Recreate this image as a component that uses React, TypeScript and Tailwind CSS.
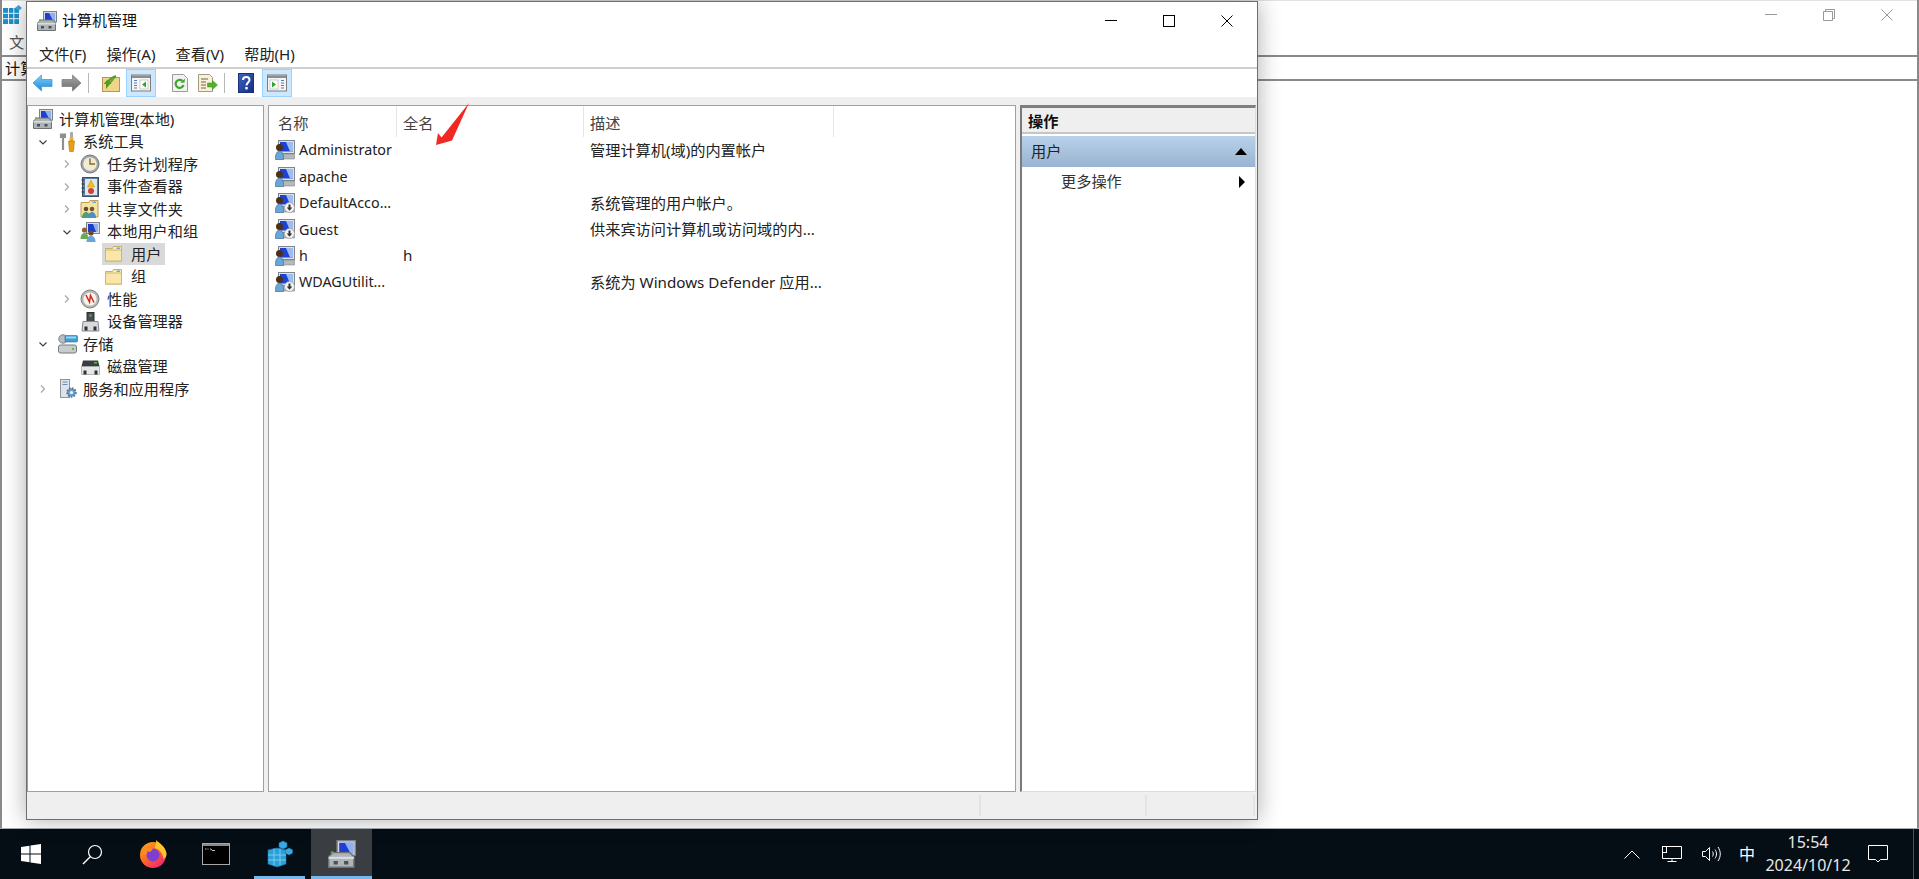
import * as React from "react";

// ---- small drawings ----

function ComputerIcon({ className = "w-5 h-5" }: { className?: string }) {
    return (
        <svg viewBox="0 0 20 20" className={className}>
            <rect x="6.5" y="0.5" width="13" height="10.5" fill="#d5d9df" stroke="#7d8288" />
            <rect x="8" y="2" width="10" height="7.5" fill="#1f3fd0" />
            <path d="M12 2h6v7.5h-2z" fill="#8fb0ef" />
            <path d="M0.5 12l3-3h12l3 3v7.5H0.5z" fill="#aeb4b8" stroke="#6c7276" />
            <rect x="0.5" y="12" width="18" height="1.5" fill="#d9dde0" />
            <rect x="4" y="15" width="3" height="2.5" fill="#4b5054" />
            <rect x="11.5" y="15" width="3" height="2.5" fill="#4b5054" />
            <circle cx="3" cy="9" r="1" fill="#62b04a" />
        </svg>
    );
}

function UserIcon({ disabled = false }: { disabled?: boolean }) {
    return (
        <svg viewBox="0 0 20 20" className="w-5 h-5 shrink-0">
            <rect x="3.5" y="0.5" width="16" height="13" fill="#dfe3e6" stroke="#7f8589" />
            <rect x="5" y="2" width="13" height="9.5" fill="#1b44d6" />
            <path d="M11 2h7v9.5h-3z" fill="#9cbcf2" />
            <rect x="7" y="14.5" width="12.500" height="4.500" fill="#b4b9bd" stroke="#7f8589" strokeWidth="0.6" />
            <circle cx="4.5" cy="7.500" r="3.500" fill="#4e3019" />
            <path d="M0.500 17.500c0-4 2-6.500 4-6.500s4 2.500 4 6.500v2h-8z" fill="#6aa6d8" stroke="#3f6f99" strokeWidth="0.7" />
            {disabled && (
                <>
                    <circle cx="14.5" cy="14.5" r="5" fill="#f4f4f4" stroke="#9a9a9a" strokeWidth="0.7" />
                    <path d="M13.5 11.5h2v3h1.8l-2.8 3.3-2.8-3.3h1.8z" fill="#333" />
                </>
            )}
        </svg>
    );
}

function FolderIcon() {
    return (
        <svg viewBox="0 0 20 18" className="w-5 h-[18px] shrink-0">
            <path d="M1.5 3.5h7l1-2h8v14.5h-16z" fill="#fbeeb8" stroke="#c9ad68" />
            <rect x="1.5" y="5" width="16" height="11" fill="#f8e7a8" stroke="#d0b672" />
            <rect x="12.5" y="2.5" width="3.5" height="1.5" fill="#6aa7dc" />
        </svg>
    );
}

function ToolsIcon() {
    return (
        <svg viewBox="0 0 20 20" className="w-5 h-5 shrink-0">
            <path d="M5 1.5v4M3 1.5v3.5h4V1.5M5 5v13" stroke="#8b9094" strokeWidth="2.2" fill="none" />
            <path d="M12.5 0.5h2v5h-2z" fill="#a8adb1" stroke="#74797d" strokeWidth="0.5" />
            <rect x="11.5" y="5.5" width="4" height="3.5" fill="#f0b020" />
            <path d="M10.5 9h6l-.8 9a2 2 0 0 1-4.4 0z" fill="#e8a010" stroke="#a06f10" strokeWidth="0.5" />
        </svg>
    );
}

function ClockIcon() {
    return (
        <svg viewBox="0 0 20 20" className="w-5 h-5 shrink-0">
            <circle cx="10" cy="10" r="9" fill="#a2a5a8" stroke="#74777a" />
            <circle cx="10" cy="10" r="6.8" fill="#f0ead6" />
            <path d="M10 4.5v5.5h5" stroke="#8a6a20" strokeWidth="1.4" fill="none" />
        </svg>
    );
}

function EventIcon() {
    return (
        <svg viewBox="0 0 20 20" className="w-5 h-5 shrink-0">
            <rect x="2.5" y="0.5" width="16" height="19" fill="#5c7fa8" stroke="#38506e" />
            <rect x="5" y="2" width="12" height="16" fill="#dfe7ef" />
            <path d="M11 3l3.5 7h-7z" fill="#f3c218" stroke="#b98a10" strokeWidth="0.5" />
            <circle cx="11" cy="14" r="3" fill="#cf4038" />
            <path d="M1.5 3h3M1.5 7h3M1.5 11h3M1.5 15h3" stroke="#30363c" strokeWidth="1.2" />
        </svg>
    );
}

function ShareIcon() {
    return (
        <svg viewBox="0 0 20 20" className="w-5 h-5 shrink-0">
            <path d="M1 3.5h8l1-2h8v16.5H1z" fill="#f5e3a0" stroke="#b99d5c" />
            <rect x="12.5" y="2.5" width="3.5" height="1.5" fill="#6aa7dc" />
            <circle cx="6" cy="10" r="2.3" fill="#6a4a2a" />
            <path d="M2 19c0-4 2-6 4-6s4 2 4 6z" fill="#4fa06a" />
            <circle cx="12" cy="10" r="2.3" fill="#7a5232" />
            <path d="M8 19c0-4 2-6 4-6s4 2 4 6z" fill="#4d8fc4" />
        </svg>
    );
}

function UsersGroupIcon() {
    return (
        <svg viewBox="0 0 20 20" className="w-5 h-5 shrink-0">
            <rect x="6.5" y="0.5" width="13" height="11" fill="#d9dde0" stroke="#7f8589" />
            <rect x="8" y="2" width="10" height="8" fill="#1b3fc8" />
            <path d="M13 2h5v8h-2z" fill="#8fb0ef" />
            <circle cx="4.5" cy="8" r="2.6" fill="#8a6236" />
            <path d="M0.5 17c0-4 2-6 4-6s4 2 4 6z" fill="#6aa85a" />
            <circle cx="11" cy="11" r="2.6" fill="#6a4a2a" />
            <path d="M6.5 20c0-4 2-6.2 4.5-6.2s4.5 2.2 4.500 6.200z" fill="#6da3d4" />
        </svg>
    );
}

function PerfIcon() {
    return (
        <svg viewBox="0 0 20 20" className="w-5 h-5 shrink-0">
            <circle cx="10" cy="10" r="9" fill="#b6b8b4" stroke="#7d7f7c" />
            <circle cx="10" cy="10" r="6.6" fill="#f4f4ea" />
            <path d="M6 6l3.500 7 1-6.500 3.500 7" stroke="#cf2a20" strokeWidth="1.5" fill="none" />
        </svg>
    );
}

function DeviceIcon() {
    return (
        <svg viewBox="0 0 20 20" className="w-5 h-5 shrink-0">
            <rect x="7" y="0.5" width="7" height="9" fill="#474c50" stroke="#2c3033" />
            <rect x="9.5" y="2.5" width="2" height="2" fill="#62c050" />
            <path d="M3 9.5h15l1 9.5H2z" fill="#d8dadc" stroke="#85898d" />
            <rect x="4.5" y="14.5" width="3" height="4" fill="#2e3235" />
            <rect x="13.5" y="14.5" width="3" height="4" fill="#2e3235" />
        </svg>
    );
}

function StorageIcon() {
    return (
        <svg viewBox="0 0 20 20" className="w-5 h-5 shrink-0">
            <rect x="0.5" y="11" width="18" height="8" rx="2" fill="#c8cccd" stroke="#777b7d" />
            <circle cx="15" cy="15" r="1.2" fill="#5ec04a" />
            <circle cx="5" cy="5" r="4.2" fill="#b9bdbf" stroke="#7d8183" />
            <rect x="7" y="1.5" width="12.5" height="6.5" rx="1" fill="#3f9ed8" stroke="#2b6f9e" strokeWidth="0.6" />
            <rect x="8" y="2.5" width="10" height="2" fill="#9fd4f2" />
        </svg>
    );
}

function DiskIcon() {
    return (
        <svg viewBox="0 0 20 20" className="w-5 h-5 shrink-0">
            <path d="M3 3.5h15l1.5 6h-18z" fill="#3a3e42" />
            <rect x="14" y="5" width="3" height="1.5" fill="#5ec04a" />
            <path d="M1.5 9.5h18v8h-18z" fill="#e6e7e8" stroke="#9a9d9f" strokeWidth="0.7" />
            <rect x="3.5" y="13.5" width="3" height="4" fill="#2e3235" />
            <rect x="14.5" y="13.5" width="3" height="4" fill="#2e3235" />
        </svg>
    );
}

function ServiceIcon() {
    return (
        <svg viewBox="0 0 20 20" className="w-5 h-5 shrink-0">
            <rect x="2.5" y="0.5" width="9" height="18" fill="#dfe3e8" stroke="#8d959c" />
            <path d="M4.5 3h5M4.5 5.5h5" stroke="#5f8fbc" strokeWidth="1.2" />
            <circle cx="13.5" cy="13.5" r="4.2" fill="#6f9fc8" stroke="#4a769c" strokeWidth="2" strokeDasharray="1.6 1.2" />
            <circle cx="13.5" cy="13.5" r="1.6" fill="#eef4fa" />
        </svg>
    );
}

function ChevronRight() {
    return (
        <svg viewBox="0 0 14 14" className="w-[14px] h-[14px]">
            <path d="M5 3.5l3.5 3.5-3.5 3.5" stroke="#a6a6a6" strokeWidth="1.2" fill="none" />
        </svg>
    );
}

function ChevronDown() {
    return (
        <svg viewBox="0 0 14 14" className="w-[14px] h-[14px]">
            <path d="M3.5 5.5l3.5 3.5 3.5-3.5" stroke="#404040" strokeWidth="1.2" fill="none" />
        </svg>
    );
}

function ArrowIcon({ back }: { back: boolean }) {
    return (
        <svg viewBox="0 0 21 18" className="w-[21px] h-[18px]">
            <defs>
                <linearGradient id="arrBlue" x1="0" y1="0" x2="0" y2="1">
                    <stop offset="0" stopColor="#7fd0fa" />
                    <stop offset="1" stopColor="#1f86d8" />
                </linearGradient>
                <linearGradient id="arrGray" x1="0" y1="0" x2="0" y2="1">
                    <stop offset="0" stopColor="#a8a8a8" />
                    <stop offset="1" stopColor="#6a6a6a" />
                </linearGradient>
            </defs>
            {back ? (
                <path d="M1 9l8.5-8v4.5h10.5v7H9.5V17z" fill="url(#arrBlue)" stroke="#3b93d6" strokeWidth="0.7" />
            ) : (
                <path d="M20 9l-8.5-8v4.5H1v7h10.5V17z" fill="url(#arrGray)" stroke="#777" strokeWidth="0.7" />
            )}
        </svg>
    );
}

function UpFolderIcon() {
    return (
        <svg viewBox="0 0 18 18" className="w-[18px] h-[18px]">
            <rect x="0.5" y="3.5" width="17" height="14" fill="#f0d48a" stroke="#b9975a" />
            <path d="M4 15v-5H1.500l4-4.500 4 4.500H7v1c0-3 3-6 7-8" fill="#4f9e24" />
            <path d="M5.500 11c0-4 3-7 8.500-9" stroke="#4f9e24" strokeWidth="2.2" fill="none" />
        </svg>
    );
}

function PaneIcon({ flip = false }: { flip?: boolean }) {
    return (
        <svg viewBox="0 0 20 18" className="w-5 h-[18px]">
            <rect x="0.5" y="1" width="19" height="16" fill="#f6f6f6" stroke="#7c7c7c" />
            <rect x="1" y="1.500" width="18" height="2.500" fill="#8d8d8d" />
            {flip ? (
                <>
                    <rect x="3" y="6" width="8" height="9" fill="#fff" stroke="#b0b0b0" strokeWidth="0.6" />
                    <path d="M5 7.500l4 3-4 3z" fill="#29a829" />
                    <path d="M14 6.500h3M14 9h3M14 11.500h3M14 14h3" stroke="#4d7fbb" strokeWidth="1.1" />
                </>
            ) : (
                <>
                    <rect x="9" y="6" width="8" height="9" fill="#fff" stroke="#b0b0b0" strokeWidth="0.6" />
                    <path d="M15 7.500l-4 3 4 3z" fill="#29a829" />
                    <path d="M3 6.500h3M3 9h3M3 11.500h3M3 14h3" stroke="#4d7fbb" strokeWidth="1.1" />
                </>
            )}
        </svg>
    );
}

function RefreshIcon() {
    return (
        <svg viewBox="0 0 16 18" className="w-4 h-[18px]">
            <path d="M0.500 0.500h11l4 4v13h-15z" fill="#f2f2f2" stroke="#9a9a9a" />
            <path d="M11.500 11a4 4 0 1 1-1-4" stroke="#3ea62a" strokeWidth="2.200" fill="none" />
            <path d="M8.500 9l4-.500.500-4z" fill="#3ea62a" />
        </svg>
    );
}

function ExportIcon() {
    return (
        <svg viewBox="0 0 20 18" className="w-5 h-[18px]">
            <path d="M0.500 0.500h11l3 3v14h-14z" fill="#f8f1d8" stroke="#a39a80" />
            <path d="M3 5h7M3 8h5M3 11h5M3 14h5" stroke="#6c6650" strokeWidth="1.100" />
            <path d="M19.500 11l-5-4.500v2.500h-5v4h5v2.500z" fill="#4cb52c" stroke="#3b8c22" strokeWidth="0.500" />
        </svg>
    );
}

function HelpIcon() {
    return (
        <svg viewBox="0 0 16 20" className="w-4 h-5">
            <defs>
                <linearGradient id="helpBlue" x1="0" y1="0" x2="1" y2="1">
                    <stop offset="0" stopColor="#3a64c8" />
                    <stop offset="1" stopColor="#142c7e" />
                </linearGradient>
            </defs>
            <rect x="0.500" y="0.500" width="15" height="19" fill="url(#helpBlue)" stroke="#1a2f78" />
            <path d="M5 7c0-4 6.500-4 6.500 0 0 2.500-3 2.500-3 5.500" stroke="#fff" strokeWidth="2" fill="none" />
            <rect x="7.300" y="14" width="2.400" height="2.400" fill="#fff" />
        </svg>
    );
}

function RegIcon({ className = "w-[26px] h-[28px]" }: { className?: string }) {
    const cell = "#2d9fd8";
    return (
        <svg viewBox="0 0 26 28" className={className}>
            <path d="M1 10l9-2 9 2v14l-9 3-9-3z" fill={cell} stroke="#1a7ab0" strokeWidth="0.6" />
            <path d="M7 8.500v17M13 8.500v17M1 15h18M1 20h18" stroke="#7fd0f4" strokeWidth="0.9" />
            <path d="M16 1l4 2v4l-4 2-4-2V3z" fill="#38a8e0" stroke="#1a7ab0" strokeWidth="0.5" />
            <path d="M22 8l3.500 1.800v3.400L22 15l-3.500-1.800V9.800z" fill="#38a8e0" stroke="#1a7ab0" strokeWidth="0.5" />
        </svg>
    );
}

function WinGridIcon() {
    return (
        <svg viewBox="0 0 20 20" className="w-5 h-5">
            <rect x="0" y="3" width="16" height="16" fill="#1f8fc8" />
            <path d="M5.500 3v16M10.800 3v16M0 8.300h16M0 13.700h16" stroke="#e8f6fd" strokeWidth="1" />
            <path d="M15.500 0l3.500 3-3.500 3-3.500-3z" fill="#38a8e0" />
        </svg>
    );
}

function FirefoxIcon() {
    return (
        <svg viewBox="0 0 28 28" className="w-7 h-7">
            <defs>
                <linearGradient id="foxBody" x1="0" y1="0" x2="0.800" y2="1">
                    <stop offset="0" stopColor="#ffb21f" />
                    <stop offset="0.500" stopColor="#ff6a1f" />
                    <stop offset="1" stopColor="#f0207a" />
                </linearGradient>
            </defs>
            <circle cx="14" cy="15" r="13" fill="url(#foxBody)" />
            <path d="M17 0c3 3 9 6 10.500 13 .5 3-1 5-3 6-1-6-4-10-9-11 1-3 2-5 1.500-8z" fill="#ffc52a" />
            <circle cx="14" cy="15" r="6.500" fill="#7c3fd0" />
            <path d="M3 8c3-2 8-1 11 1l-3 3-3-1c1 2-1 4-3 4-2-2-3-5-2-7z" fill="#ff8a1f" />
        </svg>
    );
}

function CmdIcon() {
    return (
        <svg viewBox="0 0 28 22" className="w-7 h-[22px]">
            <rect x="0.500" y="0.500" width="27" height="21" fill="#000" stroke="#a8a8a8" />
            <rect x="1" y="1" width="26" height="2" fill="#8a8a8a" />
            <path d="M3 6h1.500M5.500 6h1M8 6h1l1 1.500h3" stroke="#d0d0d0" strokeWidth="0.900" fill="none" />
        </svg>
    );
}

function WindowsLogo() {
    return (
        <svg viewBox="0 0 20 20" className="w-5 h-5">
            <path d="M0 3l8.500-1.200v7.700H0zM9.500 1.600L20 0v9.500H9.500zM0 10.500h8.500v7.700L0 17zM9.500 10.500H20V20L9.500 18.400z" fill="#fff" />
        </svg>
    );
}

function SearchGlyph() {
    return (
        <svg viewBox="0 0 21 21" className="w-[21px] h-[21px]">
            <circle cx="13" cy="8" r="6.500" stroke="#fff" strokeWidth="1.200" fill="none" />
            <path d="M8.500 12.500L1 20" stroke="#fff" strokeWidth="1.400" />
        </svg>
    );
}

// ---- data ----

type TreeRow = {
    label: string;
    icon: React.ReactNode;
    level: 0 | 1 | 2 | 3;
    chevron?: "right" | "down";
    selected?: boolean;
};

const treeRows: TreeRow[] = [
    { label: "计算机管理(本地)", icon: <ComputerIcon className="w-5 h-5 shrink-0" />, level: 0 },
    { label: "系统工具", icon: <ToolsIcon />, level: 1, chevron: "down" },
    { label: "任务计划程序", icon: <ClockIcon />, level: 2, chevron: "right" },
    { label: "事件查看器", icon: <EventIcon />, level: 2, chevron: "right" },
    { label: "共享文件夹", icon: <ShareIcon />, level: 2, chevron: "right" },
    { label: "本地用户和组", icon: <UsersGroupIcon />, level: 2, chevron: "down" },
    { label: "用户", icon: <FolderIcon />, level: 3, selected: true },
    { label: "组", icon: <FolderIcon />, level: 3 },
    { label: "性能", icon: <PerfIcon />, level: 2, chevron: "right" },
    { label: "设备管理器", icon: <DeviceIcon />, level: 2 },
    { label: "存储", icon: <StorageIcon />, level: 1, chevron: "down" },
    { label: "磁盘管理", icon: <DiskIcon />, level: 2 },
    { label: "服务和应用程序", icon: <ServiceIcon />, level: 1, chevron: "right" },
];

const users = [
    { name: "Administrator", full: "", desc: "管理计算机(域)的内置帐户", disabled: false },
    { name: "apache", full: "", desc: "", disabled: false },
    { name: "DefaultAcco...", full: "", desc: "系统管理的用户帐户。", disabled: true },
    { name: "Guest", full: "", desc: "供来宾访问计算机或访问域的内...", disabled: true },
    { name: "h", full: "h", desc: "", disabled: false },
    { name: "WDAGUtilit...", full: "", desc: "系统为 Windows Defender 应用...", disabled: true },
];

// ---- window parts ----

function Tree() {
    return (
        <div className="w-[237px] border border-[#a0a0a0] bg-white pt-[2px] text-[15.2px] text-[#222]">
            {treeRows.map((row) => {
                const chevronBox = (
                    <span className="w-[14px] h-[14px] shrink-0">
                        {row.chevron === "right" && <ChevronRight />}
                        {row.chevron === "down" && <ChevronDown />}
                    </span>
                );
                if (row.level === 0) {
                    return (
                        <div key={row.label} className="flex items-center h-[22.5px] pl-[5px] gap-[6px]">
                            {row.icon}
                            <span>{row.label}</span>
                        </div>
                    );
                }
                if (row.level === 1) {
                    return (
                        <div key={row.label} className="flex items-center h-[22.5px] pl-[8px]">
                            {chevronBox}
                            <span className="ml-[8px] mr-[5px]">{row.icon}</span>
                            <span>{row.label}</span>
                        </div>
                    );
                }
                if (row.level === 2) {
                    return (
                        <div key={row.label} className="flex items-center h-[22.5px] pl-[32px]">
                            {chevronBox}
                            <span className="ml-[6px] mr-[7px]">{row.icon}</span>
                            <span>{row.label}</span>
                        </div>
                    );
                }
                return (
                    <div key={row.label} className="flex items-center h-[22.5px] pl-[74px]">
                        <div className={row.selected ? "flex items-center gap-[7px] pl-[2px] pr-[4px] h-[22px] bg-[#d9d9d9]" : "flex items-center gap-[7px] pl-[2px] pr-[4px] h-[22px]"}>
                            {row.icon}
                            <span>{row.label}</span>
                        </div>
                    </div>
                );
            })}
        </div>
    );
}

function UserList() {
    return (
        <div className="w-[748px] border border-[#a0a0a0] bg-white text-[15.2px] text-[#222]">
            <div className="flex h-[31px] text-[#444]">
                <div className="w-[128px] pl-[9px] pt-[6px] border-r border-[#e6e6e6]">名称</div>
                <div className="w-[187px] pl-[6px] pt-[6px] border-r border-[#e6e6e6]">全名</div>
                <div className="w-[250px] pl-[6px] pt-[6px] border-r border-[#e6e6e6]">描述</div>
            </div>
            {users.map((u) => (
                <div key={u.name} className="flex items-center h-[26.4px]">
                    <div className="w-[128px] pl-[6px] flex items-center gap-[4px]">
                        <UserIcon disabled={u.disabled} />
                        <span className="whitespace-nowrap text-[14.3px]">{u.name}</span>
                    </div>
                    <div className="w-[187px] pl-[6px]">{u.full}</div>
                    <div className="w-[250px] pl-[6px] whitespace-nowrap">{u.desc}</div>
                </div>
            ))}
        </div>
    );
}

function ActionPane() {
    return (
        <div className="w-[236px] border-l-[2px] border-r border-b border-[#7a7a7a] border-r-[#dcdcdc] border-b-[#dcdcdc] border-t-[3px] border-t-[#7f7f7f] bg-white text-[15.2px] text-[#222]">
            <div className="h-[26px] pt-[3px] bg-[#efefef] pl-[6px] flex items-center font-bold text-[#111] border-b-[2px] border-[#c6c6c6]">操作</div>
            <div className="h-[31px] mt-[2px] bg-gradient-to-b from-[#b9d1ea] to-[#99b4d1] flex items-center justify-between pl-[9px] pr-[8px]">
                <span>用户</span>
                <span className="w-0 h-0 border-x-[6px] border-x-transparent border-b-[7px] border-b-black" />
            </div>
            <div className="h-[29px] flex items-center justify-between pl-[39px] pr-[10px] text-[#333]">
                <span>更多操作</span>
                <span className="w-0 h-0 border-y-[6px] border-y-transparent border-l-[6px] border-l-black" />
            </div>
        </div>
    );
}

function MainWindow() {
    return (
        <div className="absolute left-[26px] top-[1px] w-[1232px] h-[819px] flex flex-col border border-[#6e6e6e] bg-[#efefef] shadow-[0_0_22px_rgba(0,0,0,0.32)]">
            <div className="h-[40px] bg-white flex items-center pl-[10px] pb-[3px] shrink-0">
                <ComputerIcon />
                <span className="ml-[5px] text-[15px] text-[#111]">计算机管理</span>
                <div className="ml-auto flex items-center">
                    <div className="w-[58px] flex justify-center">
                        <span className="w-3 h-px bg-black" />
                    </div>
                    <div className="w-[58px] flex justify-center">
                        <span className="w-3 h-3 border border-black" />
                    </div>
                    <div className="w-[58px] flex justify-center pr-[1px]">
                        <svg viewBox="0 0 12 12" className="w-3 h-3">
                            <path d="M0.500 0.500l11 11M11.500 0.500l-11 11" stroke="#000" strokeWidth="1" />
                        </svg>
                    </div>
                    <div className="w-[1px]" />
                </div>
            </div>
            <div className="h-[27px] bg-white flex items-center gap-[20px] pl-[12px] text-[15.2px] text-[#222] border-b-[2px] border-[#cfcfcf] shrink-0">
                <span>文件(F)</span>
                <span>操作(A)</span>
                <span>查看(V)</span>
                <span>帮助(H)</span>
            </div>
            <div className="h-[28px] bg-white flex items-center pl-[5px] shrink-0">
                <ArrowIcon back />
                <span className="w-2" />
                <ArrowIcon back={false} />
                <span className="w-px h-5 bg-[#b8b8b8] ml-[6px] mr-[13px]" />
                <UpFolderIcon />
                <div className="ml-[6px] w-[30px] h-[28px] bg-[#cce8ff] border border-[#99d1ff] flex items-center justify-center">
                    <PaneIcon />
                </div>
                <span className="w-4" />
                <RefreshIcon />
                <span className="w-[10px]" />
                <ExportIcon />
                <span className="w-px h-5 bg-[#b8b8b8] ml-[6px] mr-[13px]" />
                <HelpIcon />
                <div className="ml-[8px] w-[30px] h-[28px] bg-[#cce8ff] border border-[#99d1ff] flex items-center justify-center">
                    <PaneIcon flip />
                </div>
            </div>
            <div className="flex-1 min-h-0 flex pt-[8px] gap-[4px]">
                <Tree />
                <UserList />
                <ActionPane />
            </div>
            <div className="h-[27px] flex shrink-0 py-[3px]">
                <div className="w-[954px] border-r-[2px] border-[#e4e4e4]" />
                <div className="w-[166px] border-r-[2px] border-[#e4e4e4]" />
                <div className="w-[108px] border-r-[2px] border-[#e4e4e4]" />
            </div>
            {/* annotation arrow on the screenshot */}
            <svg viewBox="0 0 40 50" className="absolute left-[407px] top-[100px] w-10 h-[50px]">
                <path d="M2 43L4 31 7.500 35.500 35 1 18 38.500z" fill="#f02a22" />
            </svg>
        </div>
    );
}

function BackWindow() {
    return (
        <div className="h-full flex flex-col border-l-[2px] border-r-[2px] border-[#8a8a8a] bg-white">
            <div className="h-[55px] flex flex-col border-t-[1px] border-[#e2e2e2] pl-[1px]">
                <div className="h-[30px] pt-[4px]">
                    <WinGridIcon />
                </div>
                <div className="h-[24px] pl-[6px] text-[15.2px] text-[#555]">文</div>
            </div>
            <div className="h-[26px] border-y-[2px] border-[#8a8a8a] pl-[3px] text-[15.2px] text-[#111] whitespace-nowrap">计算</div>
            <div className="flex-1" />
            {/* caption buttons of the window behind */}
            <div className="absolute right-0 top-0 h-[29px] flex items-center text-[#999]">
                <div className="w-[58px] flex justify-center">
                    <span className="w-3 h-px bg-[#999]" />
                </div>
                <div className="w-[58px] flex justify-center">
                    <svg viewBox="0 0 12 12" className="w-3 h-3">
                        <path d="M0.500 2.500h9v9h-9zM2.500 2.500v-2h9v9h-2" stroke="#999" fill="none" />
                    </svg>
                </div>
                <div className="w-[58px] flex justify-center mr-[3px]">
                    <svg viewBox="0 0 12 12" className="w-3 h-3">
                        <path d="M0.500 0.500l11 11M11.500 0.500l-11 11" stroke="#999" />
                    </svg>
                </div>
            </div>
        </div>
    );
}

function Taskbar() {
    return (
        <div className="h-[51px] shrink-0 flex bg-[#050d15] border-t border-[#a9adb1] text-white">
            <div className="w-[62px] flex items-center justify-center">
                <WindowsLogo />
            </div>
            <div className="w-[60px] flex items-center justify-center">
                <SearchGlyph />
            </div>
            <div className="w-[61px] flex items-center justify-center">
                <FirefoxIcon />
            </div>
            <div className="w-[61px] pl-[4px] flex items-center justify-center">
                <CmdIcon />
            </div>
            <div className="w-[61px] pl-[11px] flex items-center justify-center relative">
                <RegIcon />
                <span className="absolute left-[10px] right-0 bottom-0 h-[3px] bg-[#76b9ed]" />
            </div>
            <div className="w-[61px] ml-[6px] flex items-center justify-center bg-[#3a3d41] relative">
                <ComputerIcon className="w-7 h-7" />
                <span className="absolute left-0 right-0 bottom-0 h-[3px] bg-[#76b9ed]" />
            </div>
            <div className="flex-1" />
            <div className="flex items-center">
                <svg viewBox="0 0 16 9" className="w-4 h-[9px]">
                    <path d="M0.500 8.500L8 1l7.500 7.500" stroke="#fff" fill="none" />
                </svg>
                <svg viewBox="0 0 20 16" className="ml-[22px] w-5 h-4">
                    <path d="M0.500 0.500h19v12h-19zM10 12.500v3M5.500 15.500h9" stroke="#fff" fill="none" />
                    <rect x="0.500" y="0.500" width="4" height="6" fill="#050d15" stroke="#fff" />
                </svg>
                <svg viewBox="0 0 20 16" className="ml-[20px] w-5 h-4">
                    <path d="M0.500 5.500h3l4-4v13l-4-4h-3zM10.500 5.500c1 1.500 1 3.500 0 5M13 3.500c2 3 2 6 0 9M16 1c3 4.500 3 9.500 0 14" stroke="#fff" fill="none" />
                </svg>
                <span className="ml-[17px] text-[16px] w-4 leading-none">中</span>
                <div className="ml-[8px] w-[90px] flex flex-col items-center text-[16px] leading-[23px] text-[#e8e8e8]">
                    <span>15:54</span>
                    <span>2024/10/12</span>
                </div>
                <svg viewBox="0 0 20 18" className="ml-[15px] w-5 h-[18px]">
                    <path d="M0.500 0.500h19v14h-7l-2.500 2.500-2.500-2.500h-7z" stroke="#fff" fill="none" />
                </svg>
                <div className="ml-[25px] w-px h-full bg-[#4a5056]" />
                <div className="w-[5px]" />
            </div>
        </div>
    );
}

export default function App() {
    return (
        <div className="w-[1919px] h-[879px] flex flex-col overflow-hidden bg-white font-['Noto_Sans','Noto_Sans_CJK_SC',sans-serif]">
            <div className="relative flex-1 min-h-0">
                <BackWindow />
                <MainWindow />
            </div>
            <Taskbar />
        </div>
    );
}
